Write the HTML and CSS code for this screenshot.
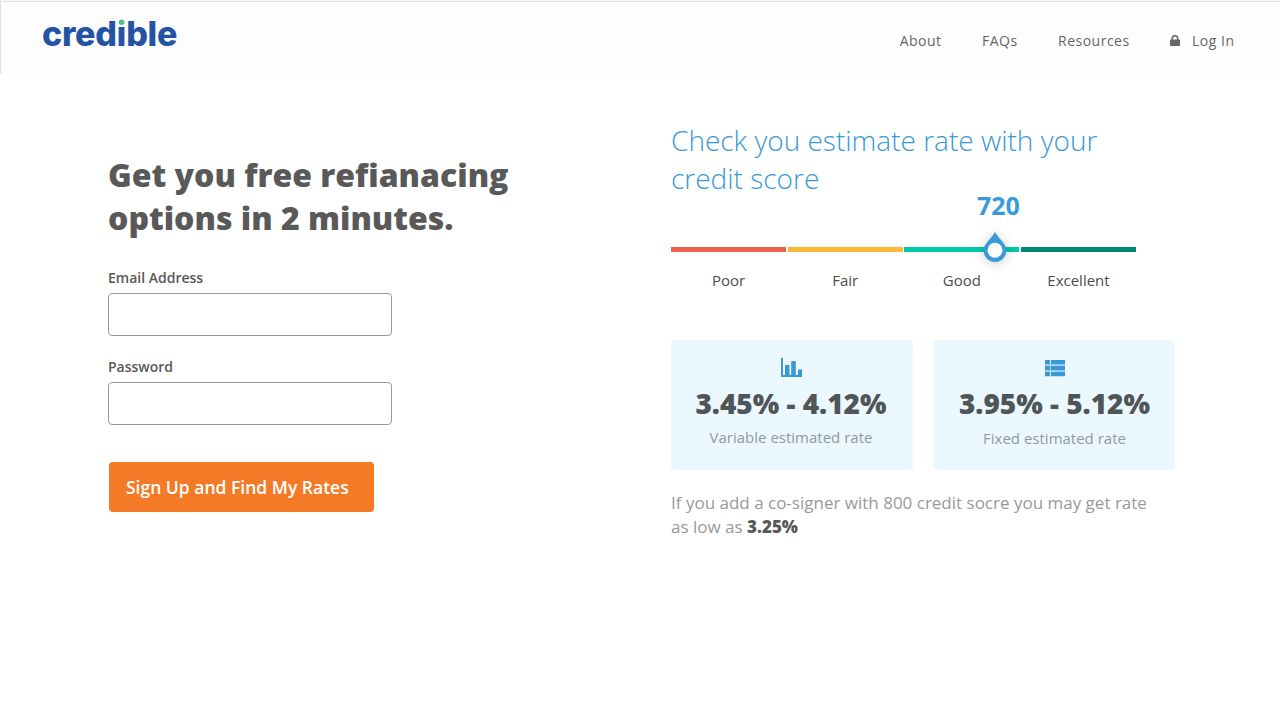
FILE: index.html
```
<!DOCTYPE html>
<html lang="en">
<head>
<meta charset="utf-8">
<title>Credible</title>
<link rel="stylesheet" href="styles.css">
</head>
<body>
<header class="topbar">
  <a class="logo">cred<span class="logo-i">i</span>ble</a>
  <nav class="nav">
    <a>About</a>
    <a>FAQs</a>
    <a>Resources</a>
    <a class="login"><svg class="lock" viewBox="0 0 10 11"><path d="M1.500 4.600V3.500a3.500 3.500 0 0 1 7 0V4.600H9.300a.7.7 0 0 1 .7.700v5a.7.7 0 0 1-.7.700H.7a.7.7 0 0 1-.7-.7v-5a.7.7 0 0 1 .7-.7zM3.100 4.600h3.800V3.500a1.900 1.900 0 0 0-3.800 0z"/></svg><span>Log In</span></a>
  </nav>
</header>
<main class="page">
  <section class="signup">
    <h1 class="headline">Get you free refianacing<br>options in 2 minutes.</h1>
    <label class="label" for="email">Email Address</label>
    <input class="field" id="email" type="email">
    <label class="label" for="password">Password</label>
    <input class="field" id="password" type="password">
    <button class="cta">Sign Up and Find My Rates</button>
  </section>
  <section class="rates">
    <h2 class="title">Check you estimate rate with your<br>credit score</h2>
    <div class="scale">
      <div class="score">720</div>
      <div class="bands">
        <div class="poor"></div><div class="fair"></div><div class="good"></div><div class="excellent"></div>
        <svg class="marker" viewBox="0 0 24 30"><path d="M12 0C14 3.500 17.500 7.500 20.500 11A11.400 11.400 0 1 1 3.500 11C6.500 7.500 10 3.500 12 0z" fill="#3a99d8"/><circle cx="12" cy="18.300" r="7.500" fill="#fff"/></svg>
      </div>
      <div class="names"><span>Poor</span><span>Fair</span><span>Good</span><span>Excellent</span></div>
    </div>
    <div class="cards">
      <div class="card variable">
        <svg class="icon" viewBox="0 0 21 19"><path d="M0 0h2v17h2V7h4.500v10h1.700V3h4.600v14h2.200v-5.500h4V19H0z"/></svg>
        <div class="rate">3.45% - 4.12%</div>
        <div class="caption">Variable estimated rate</div>
      </div>
      <div class="card fixed">
        <svg class="icon" viewBox="0 0 20 19"><path d="M0 2h5v4.300H0zM6 2h14v4.300H6zM0 8h5v4.300H0zM6 8h14v4.300H6zM0 14h5v4.300H0zM6 14h14v4.300H6z"/><path d="M0 6h20v8H0z" opacity=".35"/></svg>
        <div class="rate">3.95% - 5.12%</div>
        <div class="caption">Fixed estimated rate</div>
      </div>
    </div>
    <p class="note">If you add a co-signer with 800 credit socre you may get rate<br>as low as <strong>3.25%</strong></p>
  </section>
</main>
</body>
</html>
```
FILE: styles.css
```
* { box-sizing: border-box; }
body { margin: 0; background: #fff; color: #595959; font-family: "Open Sans", sans-serif; }
.topbar { display: flex; justify-content: space-between; height: 74px; background: #fdfdfd; border-top: 1px solid #f4f4f4; border-left: 1px solid #e0e0e0; box-shadow: inset 0 1px #e2e2e2; padding: 1px 45.500px 0 41px; }
.logo { height: 40px; margin-top: 12px; font: 800 34px/40px Inter, sans-serif; letter-spacing: -0.230px; color: #2453a5; }
.logo-i { background: linear-gradient(#52bd8e 13.500px, #2453a5 13.500px); background-clip: text; -webkit-background-clip: text; color: transparent; }
.nav { display: flex; align-items: flex-start; gap: 40.400px; margin-top: 29px; font-size: 14px; line-height: 20px; letter-spacing: 0.500px; color: #666; }
.login { display: flex; align-items: center; gap: 12px; }
.lock { width: 10px; height: 11px; margin-bottom: 1px; fill: #666; }
.page { display: flex; }
.signup { width: 671px; padding: 79px 0 0 108px; display: flex; flex-direction: column; align-items: flex-start; }
.headline { margin: 0 0 29px; font-size: 32px; line-height: 43px; font-weight: 800; }
.label { font-size: 14px; line-height: 20px; font-weight: 600; margin-bottom: 5px; }
.field { width: 284px; height: 43px; border: 1px solid #979797; border-radius: 4px; background: #fff; margin: 0 0 21px; }
.cta { margin: 16px 0 0 1px; width: 264.500px; height: 50px; padding: 1px 17px 0; border: 0; border-radius: 4px; background: #f57a28; color: #fff; font: 600 17.500px/49px "Open Sans", sans-serif; text-align: left; white-space: nowrap; }
.rates { width: 504px; padding-top: 47px; }
.title { margin: 0; font-size: 28px; line-height: 38px; font-weight: 300; color: #3a99d8; white-space: nowrap; }
.scale { width: 465px; }
.score { height: 50px; padding-left: 306px; font-size: 25px; line-height: 17px; font-weight: 700; color: #3a99d8; }
.bands { position: relative; display: grid; grid-template-columns: repeat(4, 1fr); gap: 1.670px; height: 5px; }
.poor { background: #ef604c; }
.fair { background: #fdb935; }
.good { background: #00c9aa; }
.excellent { background: #008770; }
.marker { position: absolute; left: 311.500px; top: -15px; width: 24px; height: 30px; overflow: visible; filter: drop-shadow(0 1px 6px rgba(0,0,0,.2)); }
.names { display: grid; grid-template-columns: repeat(4, 1fr); gap: 1.670px; text-align: center; margin-top: 18px; font-size: 15px; line-height: 21px; color: #4d4d4d; }
.cards { display: grid; grid-template-columns: 242px 242px; gap: 20px; margin-top: 49px; }
.card { height: 130px; border-radius: 4px; background: #ecf8ff; padding-top: 18px; text-align: center; }
.variable { padding-right: 2px; }
.fixed { padding-left: 1px; }
.icon { display: block; margin: 0 auto; width: 21px; height: 19px; fill: #3a99d8; }
.fixed .icon { width: 20px; }
.rate { font-size: 28px; line-height: 40px; margin-top: 6px; font-weight: 800; color: #505557; }
.caption { font-size: 15px; line-height: 20px; margin-top: 4px; color: #92999d; }
.fixed .caption { margin-top: 5px; }
.note { margin: 21px 0 0; font-size: 17px; line-height: 24px; color: #999; white-space: nowrap; }
.note strong { font-weight: 800; color: #595959; }
```
